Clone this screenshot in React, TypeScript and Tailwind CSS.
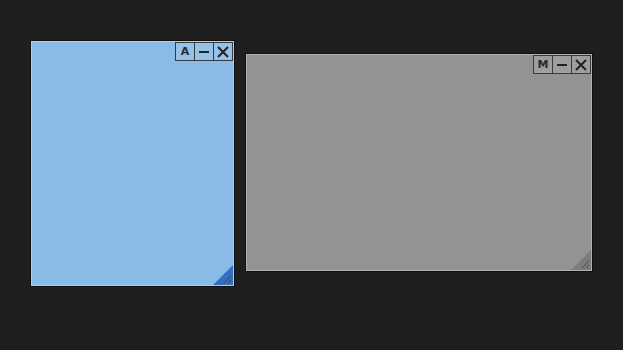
import React from "react";

function Btn({ children }: { children: React.ReactNode }) {
  return (
    <div className="w-[20px] h-[19px] border border-[#3a3a3a] flex items-center justify-center bg-white/10 -ml-px first:ml-0">
      {children}
    </div>
  );
}

function Minus() {
  return <div className="w-[10px] h-[2px] bg-[#222]" />;
}

function XIcon() {
  return (
    <svg width="14" height="14" viewBox="0 0 14 14">
      <path d="M2 2 L12 12 M12 2 L2 12" stroke="#222" strokeWidth="2" />
    </svg>
  );
}

function Grip({ fill }: { fill: string }) {
  return (
    <svg width="20" height="20" viewBox="0 0 20 20" className="absolute right-0 bottom-0">
      <polygon points="20,0 20,20 0,20" fill={fill} />
      <path d="M11 18 L18 11 M15 18 L18 15" stroke="#333" strokeWidth="1" opacity="0.7" />
    </svg>
  );
}

function Win({
  className,
  letter,
  grip,
}: {
  className: string;
  letter: string;
  grip: string;
}) {
  return (
    <div className={"absolute border border-white/30 outline outline-1 outline-black/50 " + className}>
      <div className="absolute right-0 top-0 flex">
        <Btn>
          <span className="text-[11px] font-bold text-[#2a2a2a] leading-none" style={{ fontFamily: "'DejaVu Sans', sans-serif" }}>
            {letter}
          </span>
        </Btn>
        <Btn>
          <Minus />
        </Btn>
        <Btn>
          <XIcon />
        </Btn>
      </div>
      <Grip fill={grip} />
    </div>
  );
}

export default function App() {
  return (
    <div className="relative w-[623px] h-[350px] bg-[#1f1f1f] overflow-hidden">
      <Win className="left-[31px] top-[41px] w-[203px] h-[245px] bg-[#89bbe6]" letter="A" grip="#2f6fc6" />
      <Win className="left-[246px] top-[54px] w-[346px] h-[217px] bg-[#939393]" letter="M" grip="#7c7c7c" />
    </div>
  );
}
